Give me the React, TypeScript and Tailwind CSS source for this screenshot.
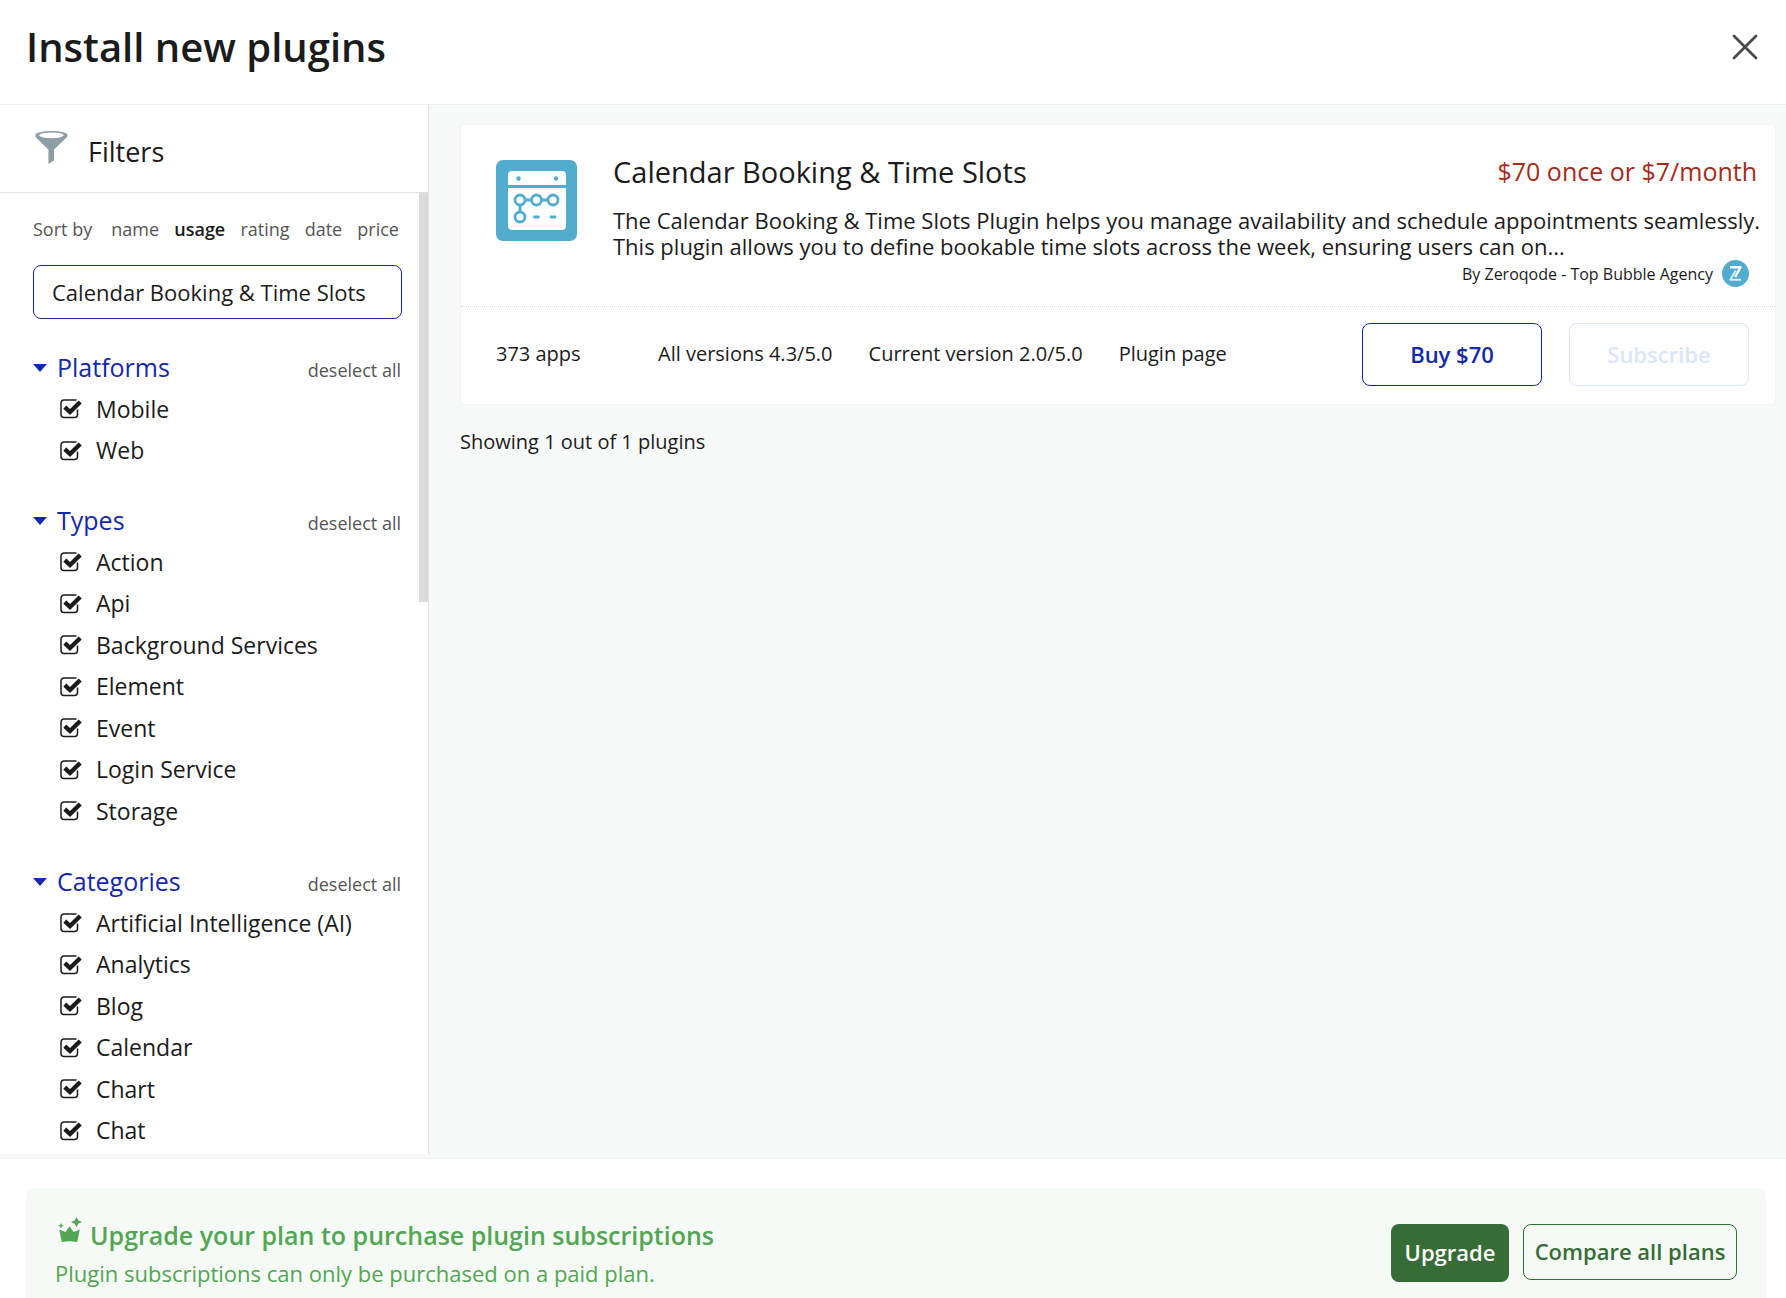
import { useState } from 'react';

const sortOptions = ['name', 'usage', 'rating', 'date', 'price'];

const filterGroups = [
  { title: 'Platforms', items: ['Mobile', 'Web'] },
  {
    title: 'Types',
    items: ['Action', 'Api', 'Background Services', 'Element', 'Event', 'Login Service', 'Storage'],
  },
  {
    title: 'Categories',
    items: ['Artificial Intelligence (AI)', 'Analytics', 'Blog', 'Calendar', 'Chart', 'Chat'],
  },
];

function FunnelIcon() {
  return (
    <svg viewBox="0 0 33 33" className="w-[33px] h-[33px]" fill="#8d9ea5">
      <path
        fillRule="evenodd"
        d="M16.500 0C7.400 0 0.300 1.800 0.300 4.200c0 1 .5 1.900 1.200 2.700L13.400 18.600V33l5.600-3.400V18.600L31.100 6.900c.8-.8 1.500-1.700 1.500-2.700C32.600 1.800 25.600 0 16.500 0Zm0 1.500c7.200 0 12.200 1.300 12.200 2.800S23.700 7.200 16.500 7.200 4.200 5.900 4.200 4.300 9.300 1.500 16.500 1.500Z"
      />
    </svg>
  );
}

function PluginLogo() {
  return (
    <svg viewBox="0 0 81 81" className="w-[81px] h-[81px] shrink-0">
      <rect width="81" height="81" rx="7" fill="#52acce" />
      <path d="M16 11h50a4 4 0 0 1 4 4v10H12V15a4 4 0 0 1 4-4Z" fill="#fff" />
      <path d="M12 28h58v38a4 4 0 0 1-4 4H16a4 4 0 0 1-4-4Z" fill="#fff" />
      <circle cx="22.500" cy="18.500" r="2.200" fill="#52acce" />
      <circle cx="60" cy="18.500" r="2.200" fill="#52acce" />
      <g fill="none" stroke="#52acce" strokeWidth="2.800">
        <path d="M29 40h6M46 40h6M24 45v7" />
        <circle cx="24" cy="40" r="5" />
        <circle cx="40.500" cy="40" r="5" />
        <circle cx="57" cy="40" r="5" />
        <circle cx="24" cy="57" r="5" />
        <path d="M38.500 57h4M55 57h4" strokeLinecap="round" />
      </g>
    </svg>
  );
}

function AgencyLogo() {
  return (
    <svg viewBox="0 0 27 27" className="w-[27px] h-[27px]">
      <circle cx="13.500" cy="13.500" r="13.500" fill="#52acce" />
      <g fill="none" stroke="#fff" strokeLinejoin="round">
        <path d="M8 7.200h10.500L13.200 17" strokeWidth="2.400" />
        <path d="M13.800 10.500 8.200 19.800H19" strokeWidth="1.900" opacity="0.8" />
      </g>
    </svg>
  );
}

function CrownIcon() {
  return (
    <svg viewBox="0 0 24 26" className="w-6 h-[26px]" fill="#53a653">
      <path d="M11.500 9.300 15.500 15 21.800 12.500 19.200 25c-4.800-1-10.600-1-15.400 0L1.200 12.500 7.500 15Z" />
      <path d="M18.500 0l1.700 3.300 3.800 1.700-3.800 1.700-1.700 3.500-1.700-3.500L13 5l3.800-1.700Z" />
      <path d="M3 6l.9 1.900 2 .8-2 .8L3 11.500l-.9-2-2-.8 2-.8Z" />
    </svg>
  );
}

function FilterItem({ label }: { label: string }) {
  const [checked, setChecked] = useState(true);

  return (
    <li className="odd:h-[42px] even:h-[41px]">
      <label className="flex h-full items-center gap-[14px] cursor-pointer">
        <span className="relative w-[22px] h-5">
          <input
            type="checkbox"
            checked={checked}
            onChange={() => setChecked(!checked)}
            className="absolute inset-0 w-full h-full appearance-none cursor-pointer"
          />
          <svg viewBox="0 0 22 20" className="w-[22px] h-5 pointer-events-none" fill="none" stroke="#1b1b1b">
            <path d="M16.500 1H4A3 3 0 0 0 1 4v11.500a3 3 0 0 0 3 3h10.500a3 3 0 0 0 3-3V10.500" strokeWidth="1.500" />
            {checked && <path d="M4.800 8.200l5.200 4.800L20.200 3" strokeWidth="4.400" />}
          </svg>
        </span>
        <span className="text-[23px]">{label}</span>
      </label>
    </li>
  );
}

export default function App() {
  const [sortBy, setSortBy] = useState('usage');
  const [search, setSearch] = useState('Calendar Booking & Time Slots');

  return (
    <div className="h-screen flex flex-col overflow-hidden bg-white text-[#1b1b1b] font-['Open_Sans',sans-serif]">
      <header className="shrink-0 flex items-center justify-between h-[105px] pl-[26px] pr-7 pb-[11px] border-b border-[#eeeeee]">
        <h1 className="text-[40px] font-semibold">Install new plugins</h1>
        <button aria-label="Close" className="cursor-pointer">
          <svg viewBox="0 0 26 26" className="w-[26px] h-[26px]" stroke="#4b4b4b" strokeWidth="2.800" strokeLinecap="round">
            <path d="M2 2l22 22M24 2L2 24" />
          </svg>
        </button>
      </header>

      <div className="flex-1 min-h-0 flex bg-[#f8faf9]">
        <aside className="w-[429px] shrink-0 mb-1 flex flex-col bg-white border-r border-[#e2e2e2]">
          <div className="shrink-0 flex items-start gap-5 h-[88px] pl-[35px] pt-[26px] border-b border-[#e2e2e2]">
            <FunnelIcon />
            <h2 className="text-[27px] leading-[42px]">Filters</h2>
          </div>

          <div className="relative flex-1 min-h-0 overflow-hidden pl-[33px] pr-[26px]">
            <div className="absolute top-0 right-0 w-[9px] h-[409px] bg-[#dbdbdb]" />

            <div className="flex justify-between pt-[23px] pr-[3px] text-lg leading-[26px] text-[#555555]">
              <span className="pr-1">Sort by</span>
              {sortOptions.map((option) => (
                <button
                  key={option}
                  onClick={() => setSortBy(option)}
                  className={option === sortBy ? 'font-semibold text-[#1b1b1b]' : 'cursor-pointer'}
                >
                  {option}
                </button>
              ))}
            </div>

            <input
              type="text"
              aria-label="Search plugins"
              value={search}
              onChange={(e) => setSearch(e.target.value)}
              className="w-full h-[54px] mt-[23px] px-[18px] text-[22px] border border-[#1429a9] rounded-lg outline-none"
            />

            <div className="flex flex-col gap-[29px] mt-7">
              {filterGroups.map((group) => (
                <section key={group.title}>
                  <div className="flex items-center justify-between h-[41px]">
                    <button className="flex items-center gap-[10px] text-[25px] text-[#1429a9] cursor-pointer">
                      <svg viewBox="0 0 14 8" className="w-[14px] h-2" fill="currentColor">
                        <path d="M0 0h14L7 8Z" />
                      </svg>
                      {group.title}
                    </button>
                    <button className="pt-1 pr-px text-lg text-[#555555] cursor-pointer">deselect all</button>
                  </div>
                  <ul className="pl-[27px]">
                    {group.items.map((item) => (
                      <FilterItem key={item} label={item} />
                    ))}
                  </ul>
                </section>
              ))}
            </div>
          </div>
        </aside>

        <main className="flex-1 min-w-0 pl-[31px] pr-[10px] pt-[19px]">
          <article className="bg-white border border-[#f3f4f4] rounded">
            <div className="flex gap-9 h-[181px] pl-[35px] pr-[10px] pt-[35px]">
              <PluginLogo />
              <div className="flex-1 min-w-0">
                <div className="flex items-center justify-between h-6 pr-2">
                  <h3 className="text-[29px]">Calendar Booking &amp; Time Slots</h3>
                  <span className="text-[25px] text-[#a62b1c]">$70 once or $7/month</span>
                </div>
                <p className="mt-[23px] text-[22px] leading-[26px]">
                  The Calendar Booking &amp; Time Slots Plugin helps you manage availability and schedule appointments seamlessly.
                  This plugin allows you to define bookable time slots across the week, ensuring users can on...
                </p>
                <div className="flex items-center justify-end gap-[9px] pt-px pr-4">
                  <span className="text-base">By Zeroqode - Top Bubble Agency</span>
                  <AgencyLogo />
                </div>
              </div>
            </div>

            <div className="flex items-center h-[98px] pl-[35px] pr-[26px] pb-[3px] border-t border-dotted border-[#d9d9d9] text-[20px]">
              <span className="w-[162px]">373 apps</span>
              <div className="flex gap-9">
                <span>All versions 4.3/5.0</span>
                <span>Current version 2.0/5.0</span>
                <a href="#">Plugin page</a>
              </div>
              <div className="ml-auto flex gap-[27px] text-[22px] font-semibold">
                <button className="w-[180px] h-[63px] border border-[#1429a9] rounded-lg text-[#1429a9] cursor-pointer">
                  Buy $70
                </button>
                <button disabled className="w-[180px] h-[63px] border border-[#dbe6f9] rounded-lg text-[#dbe6f9]">
                  Subscribe
                </button>
              </div>
            </div>
          </article>

          <p className="mt-[22px] text-[20px]">Showing 1 out of 1 plugins</p>
        </main>
      </div>

      <footer className="shrink-0 pt-[29px] pl-[26px] pr-5 border-t border-[#f1f2f2]">
        <div className="flex items-start justify-between h-[110px] px-[29px] rounded-t-lg bg-[#f5faf6]">
          <div className="pt-[29px] text-[#53a653]">
            <div className="flex items-start gap-2 pl-[3px]">
              <CrownIcon />
              <h2 className="text-[25px] leading-9 font-semibold">Upgrade your plan to purchase plugin subscriptions</h2>
            </div>
            <p className="text-[22px] leading-10">Plugin subscriptions can only be purchased on a paid plan.</p>
          </div>
          <div className="flex items-start gap-[14px] pt-9 text-[22px] font-semibold">
            <button className="w-[118px] h-[58px] pb-0.5 rounded-lg bg-[#376c37] text-white cursor-pointer">Upgrade</button>
            <button className="w-[214px] h-14 pb-0.5 rounded-lg border border-[#376c37] text-[#376c37] cursor-pointer">
              Compare all plans
            </button>
          </div>
        </div>
      </footer>
    </div>
  );
}
